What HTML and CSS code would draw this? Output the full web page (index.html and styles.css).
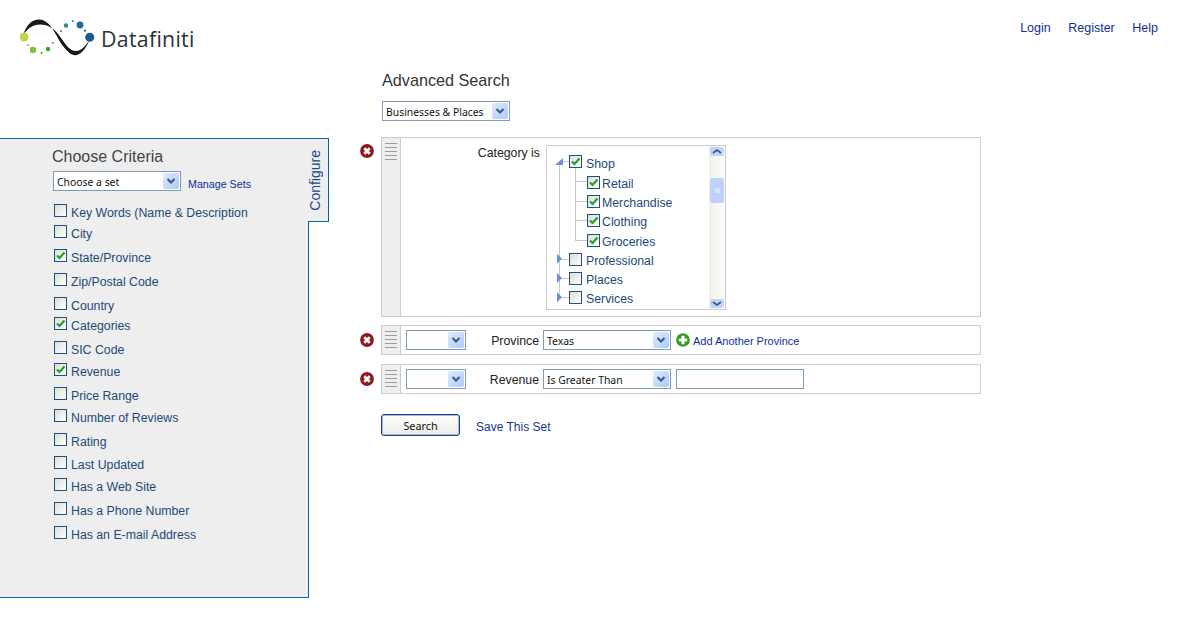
FILE: index.html

```html
<!DOCTYPE html>
<html lang="en">
  <head>
    <meta charset="UTF-8">
    <title>Datafiniti - Advanced Search</title>
    <link rel="stylesheet" href="styles.css">
  </head>
  <body>
    <svg class="defs" width="0" height="0">
      <symbol id="arrow" viewBox="0 0 16 16"><path d="M4.5 6 L8 9.5 L11.5 6" fill="none" stroke="#2d5a8c" stroke-width="2"/></symbol>
      <symbol id="tick" viewBox="0 0 11 11"><path d="M2 5.5 L4.5 8 L9.5 2.5" fill="none" stroke="#21a121" stroke-width="2.2"/></symbol>
      <symbol id="remove" viewBox="0 0 14 14"><circle cx="7" cy="7" r="6.9" fill="#8e1a1e"/><path d="M4.3 4.3 L9.7 9.7 M9.7 4.3 L4.3 9.7" stroke="#fff" stroke-width="2.7"/></symbol>
      <symbol id="add" viewBox="0 0 14 14"><circle cx="7" cy="7" r="6.8" fill="#2f9a1c"/><path d="M2.8 7 H11.2 M7 2.8 V11.2" stroke="#fff" stroke-width="3"/></symbol>
    </svg>

    <header class="top">
      <a class="logo" href="#">
        <svg width="84" height="44" viewBox="0 0 84 44">
          <path d="M3 18 C7 7 12 2.5 19 2.5 C31 2.5 36 20 43 29 C48 35 52 39.5 57 38 C63 36 67 29 70 22 C65 30 61 34 56 34 C50 34 46 28 41 21 C35 12 29 7.5 20 7.5 C13 7.5 8 11 3 18 Z" fill="#15181c"/>
          <circle cx="4" cy="20" r="4.5" fill="#bcd84a"/>
          <circle cx="8" cy="28" r="1.1" fill="#8cc63f"/>
          <circle cx="13" cy="33" r="3.2" fill="#7cc242"/>
          <circle cx="21.7" cy="36" r="1.3" fill="#7cc242"/>
          <circle cx="28" cy="32" r="2.2" fill="#2ea52e"/>
          <circle cx="33" cy="26" r="1.1" fill="#5fb53a"/>
          <circle cx="41" cy="14" r="1.1" fill="#2f8f8f"/>
          <circle cx="46" cy="8.5" r="2.2" fill="#2f8a8a"/>
          <circle cx="52.7" cy="4" r="1.1" fill="#2a7a9a"/>
          <circle cx="60" cy="8" r="3.4" fill="#23679b"/>
          <circle cx="65" cy="13.7" r="1.1" fill="#23679b"/>
          <circle cx="69.7" cy="20.3" r="4.5" fill="#1d5a93"/>
        </svg>
        <span class="logo-name">Datafiniti</span>
      </a>
      <nav class="top-nav">
        <a href="#">Login</a>
        <a href="#">Register</a>
        <a href="#">Help</a>
      </nav>
    </header>

    <main class="layout">
      <aside class="sidebar">
        <div class="panel">
          <h2 class="panel-title">Choose Criteria</h2>
          <div class="set-line">
            <div class="select sel-wide"><span class="select-text">Choose a set</span><span class="select-btn"><svg width="16" height="16"><use href="#arrow"/></svg></span></div>
            <a class="manage" href="#">Manage Sets</a>
          </div>
          <ul class="criteria">
            <li class="r21"><span class="box"></span>Key Words (Name &amp; Description</li>
            <li class="r24"><span class="box"></span>City</li>
            <li class="r24"><span class="box on"><svg width="11" height="11"><use href="#tick"/></svg></span>State/Province</li>
            <li class="r24"><span class="box"></span>Zip/Postal Code</li>
            <li class="r20"><span class="box"></span>Country</li>
            <li class="r24"><span class="box on"><svg width="11" height="11"><use href="#tick"/></svg></span>Categories</li>
            <li class="r22"><span class="box"></span>SIC Code</li>
            <li class="r24"><span class="box on"><svg width="11" height="11"><use href="#tick"/></svg></span>Revenue</li>
            <li class="r22"><span class="box"></span>Price Range</li>
            <li class="r24"><span class="box"></span>Number of Reviews</li>
            <li class="r23"><span class="box"></span>Rating</li>
            <li class="r22"><span class="box"></span>Last Updated</li>
            <li class="r24"><span class="box"></span>Has a Web Site</li>
            <li class="r24"><span class="box"></span>Has a Phone Number</li>
            <li class="r24"><span class="box"></span>Has an E-mail Address</li>
          </ul>
        </div>
        <div class="tab"><span class="tab-text">Configure</span></div>
      </aside>

      <section class="search">
        <h1 class="search-title">Advanced Search</h1>
        <div class="select sel-wide sel-type"><span class="select-text">Businesses &amp; Places</span><span class="select-btn"><svg width="16" height="16"><use href="#arrow"/></svg></span></div>

        <div class="rule rule-tall">
          <svg class="remove" width="14" height="14"><use href="#remove"/></svg>
          <div class="rule-body">
            <div class="handle"><i></i><i></i><i></i><i></i><i></i></div>
            <div class="rule-main rule-top">
              <span class="rule-label cat-label">Category is</span>
              <div class="tree-box">
                <ul class="tree">
                  <li class="node open"><span class="box on"><svg width="11" height="11"><use href="#tick"/></svg></span>Shop</li>
                  <li class="node kid first"><span class="box on"><svg width="11" height="11"><use href="#tick"/></svg></span>Retail</li>
                  <li class="node kid"><span class="box on"><svg width="11" height="11"><use href="#tick"/></svg></span>Merchandise</li>
                  <li class="node kid"><span class="box on"><svg width="11" height="11"><use href="#tick"/></svg></span>Clothing</li>
                  <li class="node kid last"><span class="box on"><svg width="11" height="11"><use href="#tick"/></svg></span>Groceries</li>
                  <li class="node shut"><span class="box"></span>Professional</li>
                  <li class="node shut"><span class="box"></span>Places</li>
                  <li class="node shut end"><span class="box"></span>Services</li>
                </ul>
                <div class="scroll">
                  <span class="scroll-btn"><svg width="14" height="9" viewBox="0 0 14 9"><path d="M3 6 L7 3 L11 6" fill="none" stroke="#2d5a8c" stroke-width="1.6"/></svg></span>
                  <span class="scroll-thumb"><i></i></span>
                  <span class="scroll-btn scroll-down"><svg width="14" height="9" viewBox="0 0 14 9"><path d="M3 3 L7 6 L11 3" fill="none" stroke="#2d5a8c" stroke-width="1.6"/></svg></span>
                </div>
              </div>
            </div>
          </div>
        </div>

        <div class="rule">
          <svg class="remove" width="14" height="14"><use href="#remove"/></svg>
          <div class="rule-body">
            <div class="handle"><i></i><i></i><i></i><i></i><i></i></div>
            <div class="rule-main">
              <div class="select sel-small"><span class="select-btn"><svg width="16" height="16"><use href="#arrow"/></svg></span></div>
              <span class="rule-label">Province</span>
              <div class="select sel-wide"><span class="select-text">Texas</span><span class="select-btn"><svg width="16" height="16"><use href="#arrow"/></svg></span></div>
              <svg class="add" width="14" height="14"><use href="#add"/></svg>
              <a class="add-link" href="#">Add Another Province</a>
            </div>
          </div>
        </div>

        <div class="rule">
          <svg class="remove" width="14" height="14"><use href="#remove"/></svg>
          <div class="rule-body">
            <div class="handle"><i></i><i></i><i></i><i></i><i></i></div>
            <div class="rule-main">
              <div class="select sel-small"><span class="select-btn"><svg width="16" height="16"><use href="#arrow"/></svg></span></div>
              <span class="rule-label">Revenue</span>
              <div class="select sel-wide"><span class="select-text">Is Greater Than</span><span class="select-btn"><svg width="16" height="16"><use href="#arrow"/></svg></span></div>
              <input class="value" type="text">
            </div>
          </div>
        </div>

        <div class="actions">
          <button class="search-btn" type="button">Search</button>
          <a class="save-link" href="#">Save This Set</a>
        </div>
      </section>
    </main>
  </body>
</html>
```

FILE: styles.css

```css
body {
  margin: 0;
  background: #fff;
  font-family: "Liberation Sans", Arial, sans-serif;
  font-size: 12.3px;
  color: #222;
}

a {
  color: #0f2f96;
  text-decoration: none;
}

ul {
  margin: 0;
  padding: 0;
  list-style: none;
}

.defs {
  display: block;
  height: 0;
}

/* header */
.top {
  display: flex;
  justify-content: space-between;
  height: 72px;
}

.logo {
  display: flex;
  align-items: flex-start;
  margin: 17px 0 0 20px;
  color: #2b3138;
}

.logo-name {
  margin: 7px 0 0 -3px;
  font-family: "Open Sans", sans-serif;
  font-size: 21.3px;
  letter-spacing: 0.3px;
}

.top-nav {
  display: flex;
  gap: 17.5px;
  margin: 21px 24px 0 0;
  font-size: 12.5px;
  line-height: 15px;
}

/* two columns */
.layout {
  display: flex;
  gap: 31px;
  align-items: flex-start;
}

.sidebar {
  display: flex;
  align-items: flex-start;
  margin-top: 66px;
}

.panel {
  box-sizing: border-box;
  width: 309px;
  height: 460px;
  padding: 10px 0 0 52px;
  background: #eeeeee;
  border: 1px solid #006595;
  border-left: 0;
}

.panel-title {
  margin: 0;
  font-size: 16px;
  line-height: 16px;
  font-weight: normal;
  color: #444;
}

.set-line {
  display: flex;
  align-items: flex-end;
  gap: 7px;
  margin: 6px 0 0 1px;
}

.manage {
  font-size: 10.7px;
  line-height: 13px;
}

.tab {
  box-sizing: border-box;
  display: flex;
  align-items: center;
  width: 21px;
  height: 84px;
  margin-left: -1px;
  background: #eeeeee;
  border: 1px solid #006595;
  border-left: 0;
}

.tab-text {
  margin-left: -1px;
  writing-mode: vertical-rl;
  transform: rotate(180deg);
  font-size: 14px;
  color: #1a478f;
}

.criteria {
  margin: 13px 0 0 2px;
  color: #1c4a7a;
}

.criteria li {
  display: flex;
  align-items: flex-start;
  gap: 4px;
  line-height: 18px;
}

.r20 { height: 20px; }
.r21 { height: 21px; }
.r22 { height: 22px; }
.r23 { height: 23px; }
.r24 { height: 24px; }

/* checkbox */
.box {
  box-sizing: border-box;
  flex: none;
  display: block;
  width: 13px;
  height: 13px;
  background: linear-gradient(135deg, #dcdcd7, #fff);
  border: 1px solid #1c5180;
}

.box svg {
  display: block;
}

/* fake select */
.select {
  box-sizing: border-box;
  display: flex;
  align-items: center;
  justify-content: space-between;
  height: 20px;
  padding: 0 1px 0 3px;
  background: #fff;
  border: 1px solid #7f9db9;
  font-family: "Noto Sans", sans-serif;
  font-size: 10.4px;
  color: #111;
}

.select-text {
  padding-top: 2px;
}

.sel-wide { width: 128px; }
.sel-small { width: 60px; justify-content: flex-end; }

.select-btn {
  display: block;
  width: 16px;
  height: 16px;
  border-radius: 2px;
  background: linear-gradient(135deg, #e1eafe, #aec8f7);
}

.select-btn svg {
  display: block;
}

/* search column */
.search {
  width: 621px;
}

.search-title {
  margin: -1px 0 0 22px;
  font-size: 16.2px;
  line-height: 18px;
  font-weight: normal;
  color: #333;
}

.sel-type {
  margin: 12px 0 16px 22px;
}

.rule {
  display: flex;
  align-items: flex-start;
  margin-bottom: 9px;
}

.rule-tall {
  margin-bottom: 8px;
}

.remove {
  flex: none;
  margin: 8px 7px 0 0;
}

.rule-tall .remove {
  margin-top: 7px;
}

.rule-body {
  box-sizing: border-box;
  display: flex;
  width: 600px;
  height: 30px;
  border: 1px solid #ccc;
}

.rule-tall .rule-body {
  height: 180px;
}

.handle {
  flex: none;
  display: flex;
  flex-direction: column;
  gap: 3px;
  box-sizing: border-box;
  width: 19px;
  padding: 5px 3px 0;
  background: #eeeeee;
  border-right: 1px solid #ccc;
}

.handle i {
  display: block;
  height: 1px;
  background: #9c9c9c;
}

.rule-main {
  display: flex;
  align-items: center;
  flex: 1;
  padding-left: 5px;
}

.rule-top {
  align-items: flex-start;
  padding-top: 7px;
}

.rule-label {
  width: 73px;
  margin-right: 4px;
  padding-top: 2px;
  text-align: right;
  color: #222;
}

.cat-label {
  width: 134px;
  padding-top: 0;
  line-height: 16px;
  margin-right: 6px;
}

.add {
  margin-left: 5px;
}

.add-link {
  margin-left: 3px;
  padding-top: 2px;
  font-size: 11px;
}

.value {
  box-sizing: border-box;
  width: 128px;
  height: 20px;
  margin: 0 0 0 5px;
  padding: 0;
  border: 1px solid #7f9db9;
  background: #fff;
}

/* category tree */
.tree-box {
  box-sizing: border-box;
  display: flex;
  justify-content: space-between;
  width: 180px;
  height: 165px;
  border: 1px solid #ccc;
}

.tree {
  padding: 9px 0 0 22px;
  color: #1c4a7a;
}

.node {
  position: relative;
  display: flex;
  gap: 4px;
  height: 19.2px;
  line-height: 16px;
  box-sizing: border-box;
}

.open {
  height: 21px;
  line-height: 18px;
}

.kid {
  margin-left: 18px;
  gap: 2px;
}

/* connector lines and twisties */
.node::before {
  content: "";
  position: absolute;
  left: -10px;
  top: 0;
  width: 10px;
  height: 100%;
  box-sizing: border-box;
  border-left: 1px solid #c8c8c8;
  background: linear-gradient(#c8c8c8, #c8c8c8) 0 6px / 10px 1px no-repeat;
}

.end::before,
.kid.last::before {
  height: 7px;
}

.kid::before {
  left: -12px;
  width: 12px;
  background-size: 12px 1px;
}

.kid.first::before {
  top: -8px;
  height: calc(100% + 8px);
  background-position: 0 13px;
}

/* the trunk keeps running past the open branch */
.kid::after {
  content: "";
  position: absolute;
  left: -28px;
  top: 0;
  width: 1px;
  height: 100%;
  background: #c8c8c8;
}

.open::after,
.shut::after {
  content: "";
  position: absolute;
}

.open::after {
  left: -14px;
  top: 3px;
  width: 8px;
  height: 7px;
  background: #6d8fdc;
  clip-path: polygon(100% 0, 100% 100%, 0 100%);
}

.shut::after {
  left: -12px;
  top: 1px;
  width: 5px;
  height: 10px;
  background: #6d8fdc;
  clip-path: polygon(0 0, 100% 50%, 0 100%);
}

.open::before {
  border-left: 0;
  background:
    linear-gradient(#c8c8c8, #c8c8c8) 4px 6px / 6px 1px no-repeat,
    linear-gradient(#c8c8c8, #c8c8c8) 0 10px / 1px 11px no-repeat;
}

.scroll {
  display: flex;
  flex-direction: column;
  flex: none;
  width: 16px;
  padding: 1px 1px 1px 0;
  box-sizing: border-box;
  background: linear-gradient(90deg, #f1f1ec, #fbfbf8);
}

.scroll-btn {
  display: block;
  width: 14px;
  height: 9px;
  margin-left: 1px;
  border-radius: 2px;
  background: #c3d4fb;
}

.scroll-btn svg {
  display: block;
}

.scroll-down {
  margin-top: auto;
}

.scroll-thumb {
  display: flex;
  align-items: center;
  justify-content: center;
  width: 14px;
  height: 25px;
  margin: 22px 0 0 1px;
  border-radius: 2px;
  background: #bfd1fb;
}

.scroll-thumb i {
  display: block;
  width: 5px;
  height: 5px;
  background: #d5e1fc;
}

/* bottom actions */
.actions {
  display: flex;
  align-items: center;
  gap: 16px;
  margin: 20px 0 0 21px;
}

.search-btn {
  box-sizing: border-box;
  width: 79px;
  height: 22px;
  padding: 1px 0 0;
  border: 1px solid #1b3f7a;
  border-radius: 3px;
  box-shadow: inset 0 0 0 1px #9dbbe8;
  background: linear-gradient(#fff, #ecebe5);
  font-family: "Noto Sans", sans-serif;
  font-size: 10.8px;
  color: #111;
}

.save-link {
  padding-top: 3px;
  font-size: 12px;
  color: #12358f;
}
```
